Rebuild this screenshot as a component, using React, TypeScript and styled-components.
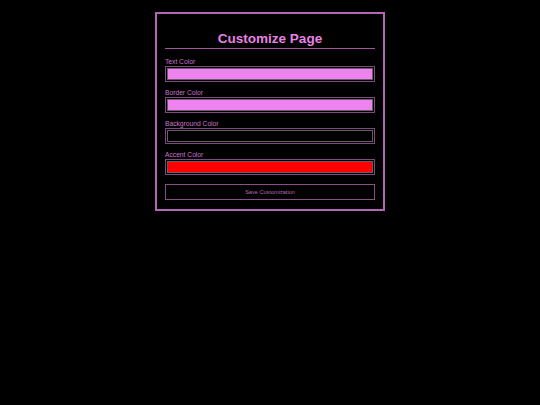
import React, { useState } from "react";
import styled, { createGlobalStyle } from "styled-components";

const GlobalStyle = createGlobalStyle`
  html, body {
    margin: 0;
    background: #000;
  }
  body {
    font-family: "Liberation Sans", Arial, sans-serif;
  }
`;

const Page = styled.div`
  display: flex;
  justify-content: center;
  padding-top: 12px;
`;

const Panel = styled.form`
  width: 230px;
  box-sizing: border-box;
  border: 2px solid #b565b5;
  padding: 8px 8px 9px;
  display: flex;
  flex-direction: column;
`;

const Title = styled.h1`
  margin: 9px 0 0;
  font-size: 13.5px;
  line-height: 16px;
  font-weight: 700;
  color: #e882e4;
  text-align: center;
`;

const Rule = styled.hr`
  margin: 1px 0 9px;
  border: none;
  height: 1px;
  background: #a058a0;
`;

const Field = styled.label`
  display: flex;
  flex-direction: column;
  margin-bottom: 7px;
`;

const FieldLabel = styled.span`
  font-size: 6.7px;
  line-height: 8px;
  color: #cc74cc;
`;

const ColorInput = styled.input`
  -webkit-appearance: none;
  appearance: none;
  width: 100%;
  height: 16px;
  box-sizing: border-box;
  margin: 0;
  padding: 1px;
  border: 1.5px solid #7c4a7c;
  background: #000;
  cursor: pointer;

  &::-webkit-color-swatch-wrapper {
    padding: 0;
  }
  &::-webkit-color-swatch {
    border: 1px solid #6a5a6a;
    border-radius: 0;
  }
`;

const SaveButton = styled.button`
  margin-top: 2px;
  height: 16px;
  box-sizing: border-box;
  background: #000;
  border: 1px solid #8a4f8a;
  color: #b36bb3;
  font-family: "Liberation Sans", Arial, sans-serif;
  font-size: 5.6px;
  padding: 0;
  cursor: pointer;
`;

const fields = [
  { key: "text", label: "Text Color", value: "#ee82ee" },
  { key: "border", label: "Border Color", value: "#ee82ee" },
  { key: "background", label: "Background Color", value: "#000000" },
  { key: "accent", label: "Accent Color", value: "#ff0000" },
];

export default function App() {
  const [colors, setColors] = useState<Record<string, string>>(
    Object.fromEntries(fields.map((f) => [f.key, f.value]))
  );

  return (
    <>
      <GlobalStyle />
      <Page>
        <Panel onSubmit={(e) => e.preventDefault()}>
          <Title>Customize Page</Title>
          <Rule />
          {fields.map((f) => (
            <Field key={f.key}>
              <FieldLabel>{f.label}</FieldLabel>
              <ColorInput
                type="color"
                value={colors[f.key]}
                onChange={(e) =>
                  setColors({ ...colors, [f.key]: e.target.value })
                }
              />
            </Field>
          ))}
          <SaveButton type="submit">Save Customization</SaveButton>
        </Panel>
      </Page>
    </>
  );
}
